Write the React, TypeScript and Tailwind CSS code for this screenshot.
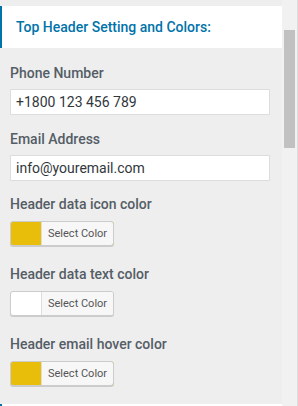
const font = { fontFamily: "Roboto, 'Noto Sans', Arial, sans-serif" };

function Label({ text, className }: { text: string; className: string }) {
  return (
    <div className={`text-[14px] leading-[20px] font-medium text-[#555d66] ${className}`}>
      {text}
    </div>
  );
}

function TextInput({ value }: { value: string }) {
  return (
    <div className="mt-[6px] h-[26px] w-[260px] border border-[#dddddd] bg-white pl-[5px] text-[14px] leading-[24px] text-[#32373c]">
      {value}
    </div>
  );
}

function ColorButton({ color }: { color: string }) {
  return (
    <div
      className="mt-[7px] flex h-[25px] w-[104px] rounded-[3px] border border-[#cccccc] shadow-[0_1px_0_#cccccc]"
      style={{ backgroundColor: color }}
    >
      <div className="ml-[30px] flex-1 rounded-r-[2px] border-l border-[#dddddd] bg-[#f7f7f7] pl-[6px] text-[11px] leading-[23px] text-[#555555]">
        Select Color
      </div>
    </div>
  );
}

export default function App() {
  return (
    <div className="flex h-[406px] w-[298px] overflow-hidden bg-[#eeeeee]" style={font}>
      <div className="flex w-[282px] flex-col pt-[6px]">
        <div className="flex h-[42px] shrink-0 items-center border-l-2 border-[#0073aa] bg-white pl-[14px] text-[14px] font-medium text-[#0073aa]">
          Top Header Setting and Colors:
        </div>

        <div className="pl-[10px]">
          <Label text="Phone Number" className="mt-[15px]" />
          <TextInput value="+1800 123 456 789" />

          <Label text="Email Address" className="mt-[14px]" />
          <TextInput value="info@youremail.com" />

          <Label text="Header data icon color" className="mt-[13px]" />
          <ColorButton color="#e9be0b" />

          <Label text="Header data text color" className="mt-[18px]" />
          <ColorButton color="#ffffff" />

          <Label text="Header email hover color" className="mt-[18px]" />
          <ColorButton color="#e9be0b" />
        </div>

        <div className="mt-[18px] h-[42px] shrink-0 border-l-2 border-[#0073aa] bg-white" />
      </div>

      <div className="w-[15px] shrink-0 bg-[#f1f1f1] pl-[2px]">
        <div className="mt-[30px] h-[118px] w-[11px] bg-[#c1c1c1]" />
      </div>
      <div className="w-[1px] shrink-0 bg-[#dcdcdc]" />
    </div>
  );
}
